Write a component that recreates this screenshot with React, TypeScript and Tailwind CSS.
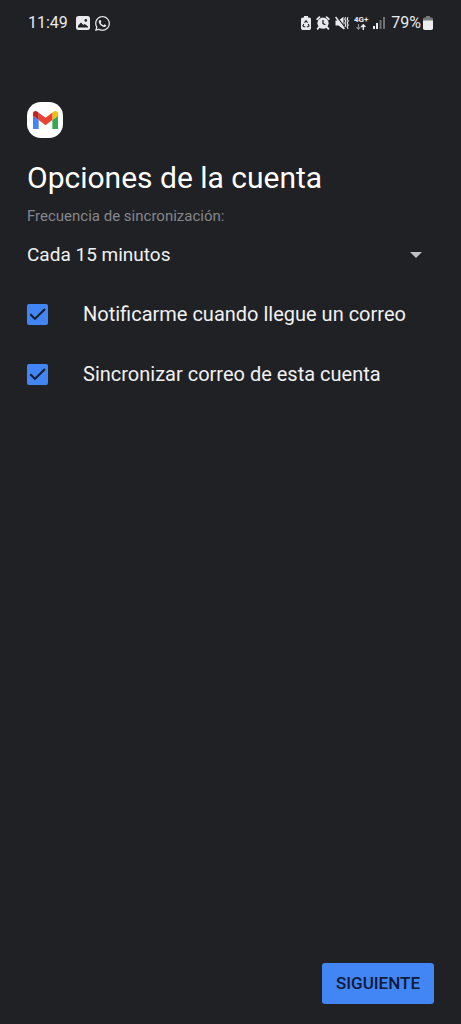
import { useState } from "react";
import { FaWhatsapp } from "react-icons/fa";

const GmailLogo = () => (
  <div className="flex size-9 items-center justify-center rounded-[14px] bg-white">
    <svg viewBox="52 42 88 66" className="w-[25px]" role="img" aria-label="Gmail">
      <path fill="#4285f4" d="M58 108h14V74L52 59v43c0 3.32 2.69 6 6 6" />
      <path fill="#34a853" d="M120 108h14c3.32 0 6-2.69 6-6V59l-20 15" />
      <path fill="#fbbc04" d="M120 48v26l20-15v-8c0-7.42-8.47-11.65-14.4-7.2" />
      <path fill="#ea4335" d="M72 74V48l24 18 24-18v26L96 92" />
      <path fill="#c5221f" d="M52 51v8l20 15V48l-5.6-4.2c-5.94-4.45-14.4-.22-14.4 7.2" />
    </svg>
  </div>
);

const PictureIcon = () => (
  <svg viewBox="0 0 14 14" className="size-3.5">
    <rect width="14" height="14" rx="2.5" fill="#e8eaed" />
    <path d="M2 11.5v-1.8L5 6.5l2.4 2.6 1.3-1.2L12 10.6v.9z" fill="#202125" />
    <circle cx="9.8" cy="4.4" r="1.3" fill="#202125" />
  </svg>
);

const BatterySaverIcon = () => (
  <svg viewBox="0 0 10 14" className="h-3.5 w-2.5">
    <path d="M3 0h4v1.5h1.2Q10 1.5 10 3.3v8.9Q10 14 8.2 14H1.8Q0 14 0 12.2V3.3q0-1.8 1.8-1.8H3z" fill="#e8eaed" />
    <path
      d="M3.5 6.8 5 4.7l1.5 2.1M7.2 8l.9 1.9-1.1.9H5.8M4.2 10.8H3l-1.1-.9.9-1.9"
      fill="none"
      stroke="#202125"
      strokeWidth="1.1"
    />
  </svg>
);

const AlarmIcon = () => (
  <svg viewBox="0 0 14 14" className="size-3.5">
    <circle cx="7" cy="7.2" r="5.6" fill="#e8eaed" />
    <path
      d="M1.2 3.2 3.4 1.2M12.8 3.2 10.6 1.2M3 11.2l-1.4 1.6M11 11.2l1.4 1.6"
      stroke="#e8eaed"
      strokeWidth="1.8"
      strokeLinecap="round"
    />
    <path d="M7 4v3.5l2.4 1.3" fill="none" stroke="#202125" strokeWidth="1.3" />
  </svg>
);

const VibrateMuteIcon = () => (
  <svg viewBox="0 0 14 14" className="size-3.5">
    <path d="M.5 4.4h3L8.5.8v12.4L3.5 9.6h-3z" fill="#e8eaed" />
    <path d="M1.8.6 10 11.4" stroke="#202125" strokeWidth="1.2" />
    <path d="m.6 1 8.8 12" stroke="#e8eaed" strokeWidth="1.5" />
    <path
      d="m10.6 1.2-.8 1.9 1 1.9-1 2 1 1.9-.8 2M13 1.2l-.8 1.9 1 1.9-1 2 1 1.9-1 2 .8 2"
      fill="none"
      stroke="#e8eaed"
      strokeWidth="1.2"
    />
  </svg>
);

const DataArrowsIcon = () => (
  <svg viewBox="0 0 10 6" className="h-1.5 w-2.5" fill="none">
    <path d="M2.5 0v5M.5 3.2l2 2 2-2" stroke="#8f9195" strokeWidth="1.1" />
    <path d="M7.3 6V1M5.2 2.9l2.1-2.1 2.1 2.1" stroke="#e8eaed" strokeWidth="1.4" />
  </svg>
);

const SignalIcon = () => (
  <svg viewBox="0 0 12 12" className="size-3">
    <rect x="0" y="9" width="2" height="3" fill="#e8eaed" />
    <rect x="3" y="6" width="2" height="6" fill="#e8eaed" />
    <rect x="6.5" y="3" width="2" height="9" fill="#707175" />
    <rect x="10" y="0" width="2" height="12" fill="#707175" />
  </svg>
);

const BatteryIcon = () => (
  <svg viewBox="0 0 10 14" className="h-3.5 w-2.5">
    <path d="M3 0h4v1.5h1.5Q10 1.5 10 3v2H0V3q0-1.5 1.5-1.5H3z" fill="#77787c" />
    <path d="M0 4.5h10v7.7q0 1.8-1.8 1.8H1.8Q0 14 0 12.2z" fill="#eeeeee" />
  </svg>
);

const StatusBar = () => (
  <header className="flex h-[46px] items-center justify-between px-7 text-base text-[#e8eaed]">
    <div className="flex items-center gap-1">
      <span className="mr-1">11:49</span>
      <PictureIcon />
      <FaWhatsapp className="size-[17px]" />
    </div>
    <div className="flex items-center">
      <div className="mr-1.5 flex items-center gap-[5px]">
        <BatterySaverIcon />
        <AlarmIcon />
        <VibrateMuteIcon />
        <div className="flex flex-col items-center">
          <span className="text-[8px] leading-2 font-bold">4G+</span>
          <DataArrowsIcon />
        </div>
        <SignalIcon />
      </div>
      <span className="mr-0.5">79%</span>
      <BatteryIcon />
    </div>
  </header>
);

interface CheckOptionProps {
  id: string;
  label: string;
  checked: boolean;
  onChange: (checked: boolean) => void;
}

const CheckOption = ({ id, label, checked, onChange }: CheckOptionProps) => (
  <div className="flex items-center gap-[35px]">
    <div className="relative size-[21px] shrink-0">
      <input
        id={id}
        type="checkbox"
        checked={checked}
        onChange={(e) => onChange(e.target.checked)}
        className="block size-full appearance-none rounded-[2px] border-2 border-[#9aa0a6] checked:border-[#4285f4] checked:bg-[#4285f4]"
      />
      {checked && (
        <svg viewBox="0 0 22 22" className="pointer-events-none absolute inset-0" fill="none">
          <path d="m3.5 10.8 4.8 4.8L18.8 5.2" stroke="#171c2b" strokeWidth="2.2" />
        </svg>
      )}
    </div>
    <label htmlFor={id} className="text-xl leading-7">
      {label}
    </label>
  </div>
);

const App = () => {
  const [frequency, setFrequency] = useState("15");
  const [notify, setNotify] = useState(true);
  const [sync, setSync] = useState(true);

  return (
    <div className="flex min-h-screen flex-col bg-[#202125] font-['Roboto',sans-serif] text-[#f1f1f3]">
      <StatusBar />

      <main className="flex-1 px-[27px] pt-14">
        <GmailLogo />
        <h1 className="mt-5 text-[30px] leading-10 text-white">Opciones de la cuenta</h1>

        <label htmlFor="frequency" className="mt-2 block text-[15px] leading-5 text-[#85868a]">
          Frecuencia de sincronización:
        </label>
        <div className="relative mt-3">
          <select
            id="frequency"
            value={frequency}
            onChange={(e) => setFrequency(e.target.value)}
            className="block h-[34px] w-full appearance-none bg-transparent text-[19px]"
          >
            <option value="15">Cada 15 minutos</option>
            <option value="30">Cada 30 minutos</option>
            <option value="60">Cada hora</option>
          </select>
          <svg viewBox="0 0 12 6" className="pointer-events-none absolute top-3.5 right-3 h-1.5 w-3">
            <path d="M0 0h12L6 6z" fill="#c0c1c3" />
          </svg>
        </div>

        <div className="mt-7 flex flex-col gap-8">
          <CheckOption
            id="notify"
            label="Notificarme cuando llegue un correo"
            checked={notify}
            onChange={setNotify}
          />
          <CheckOption
            id="sync"
            label="Sincronizar correo de esta cuenta"
            checked={sync}
            onChange={setSync}
          />
        </div>
      </main>

      <footer className="flex justify-end px-[27px] pb-5">
        <button
          type="button"
          className="h-[41px] rounded-[3px] bg-[#4285f4] px-3.5 text-[17px] font-medium text-[#0d1a38]"
        >
          SIGUIENTE
        </button>
      </footer>
    </div>
  );
};

export default App;
